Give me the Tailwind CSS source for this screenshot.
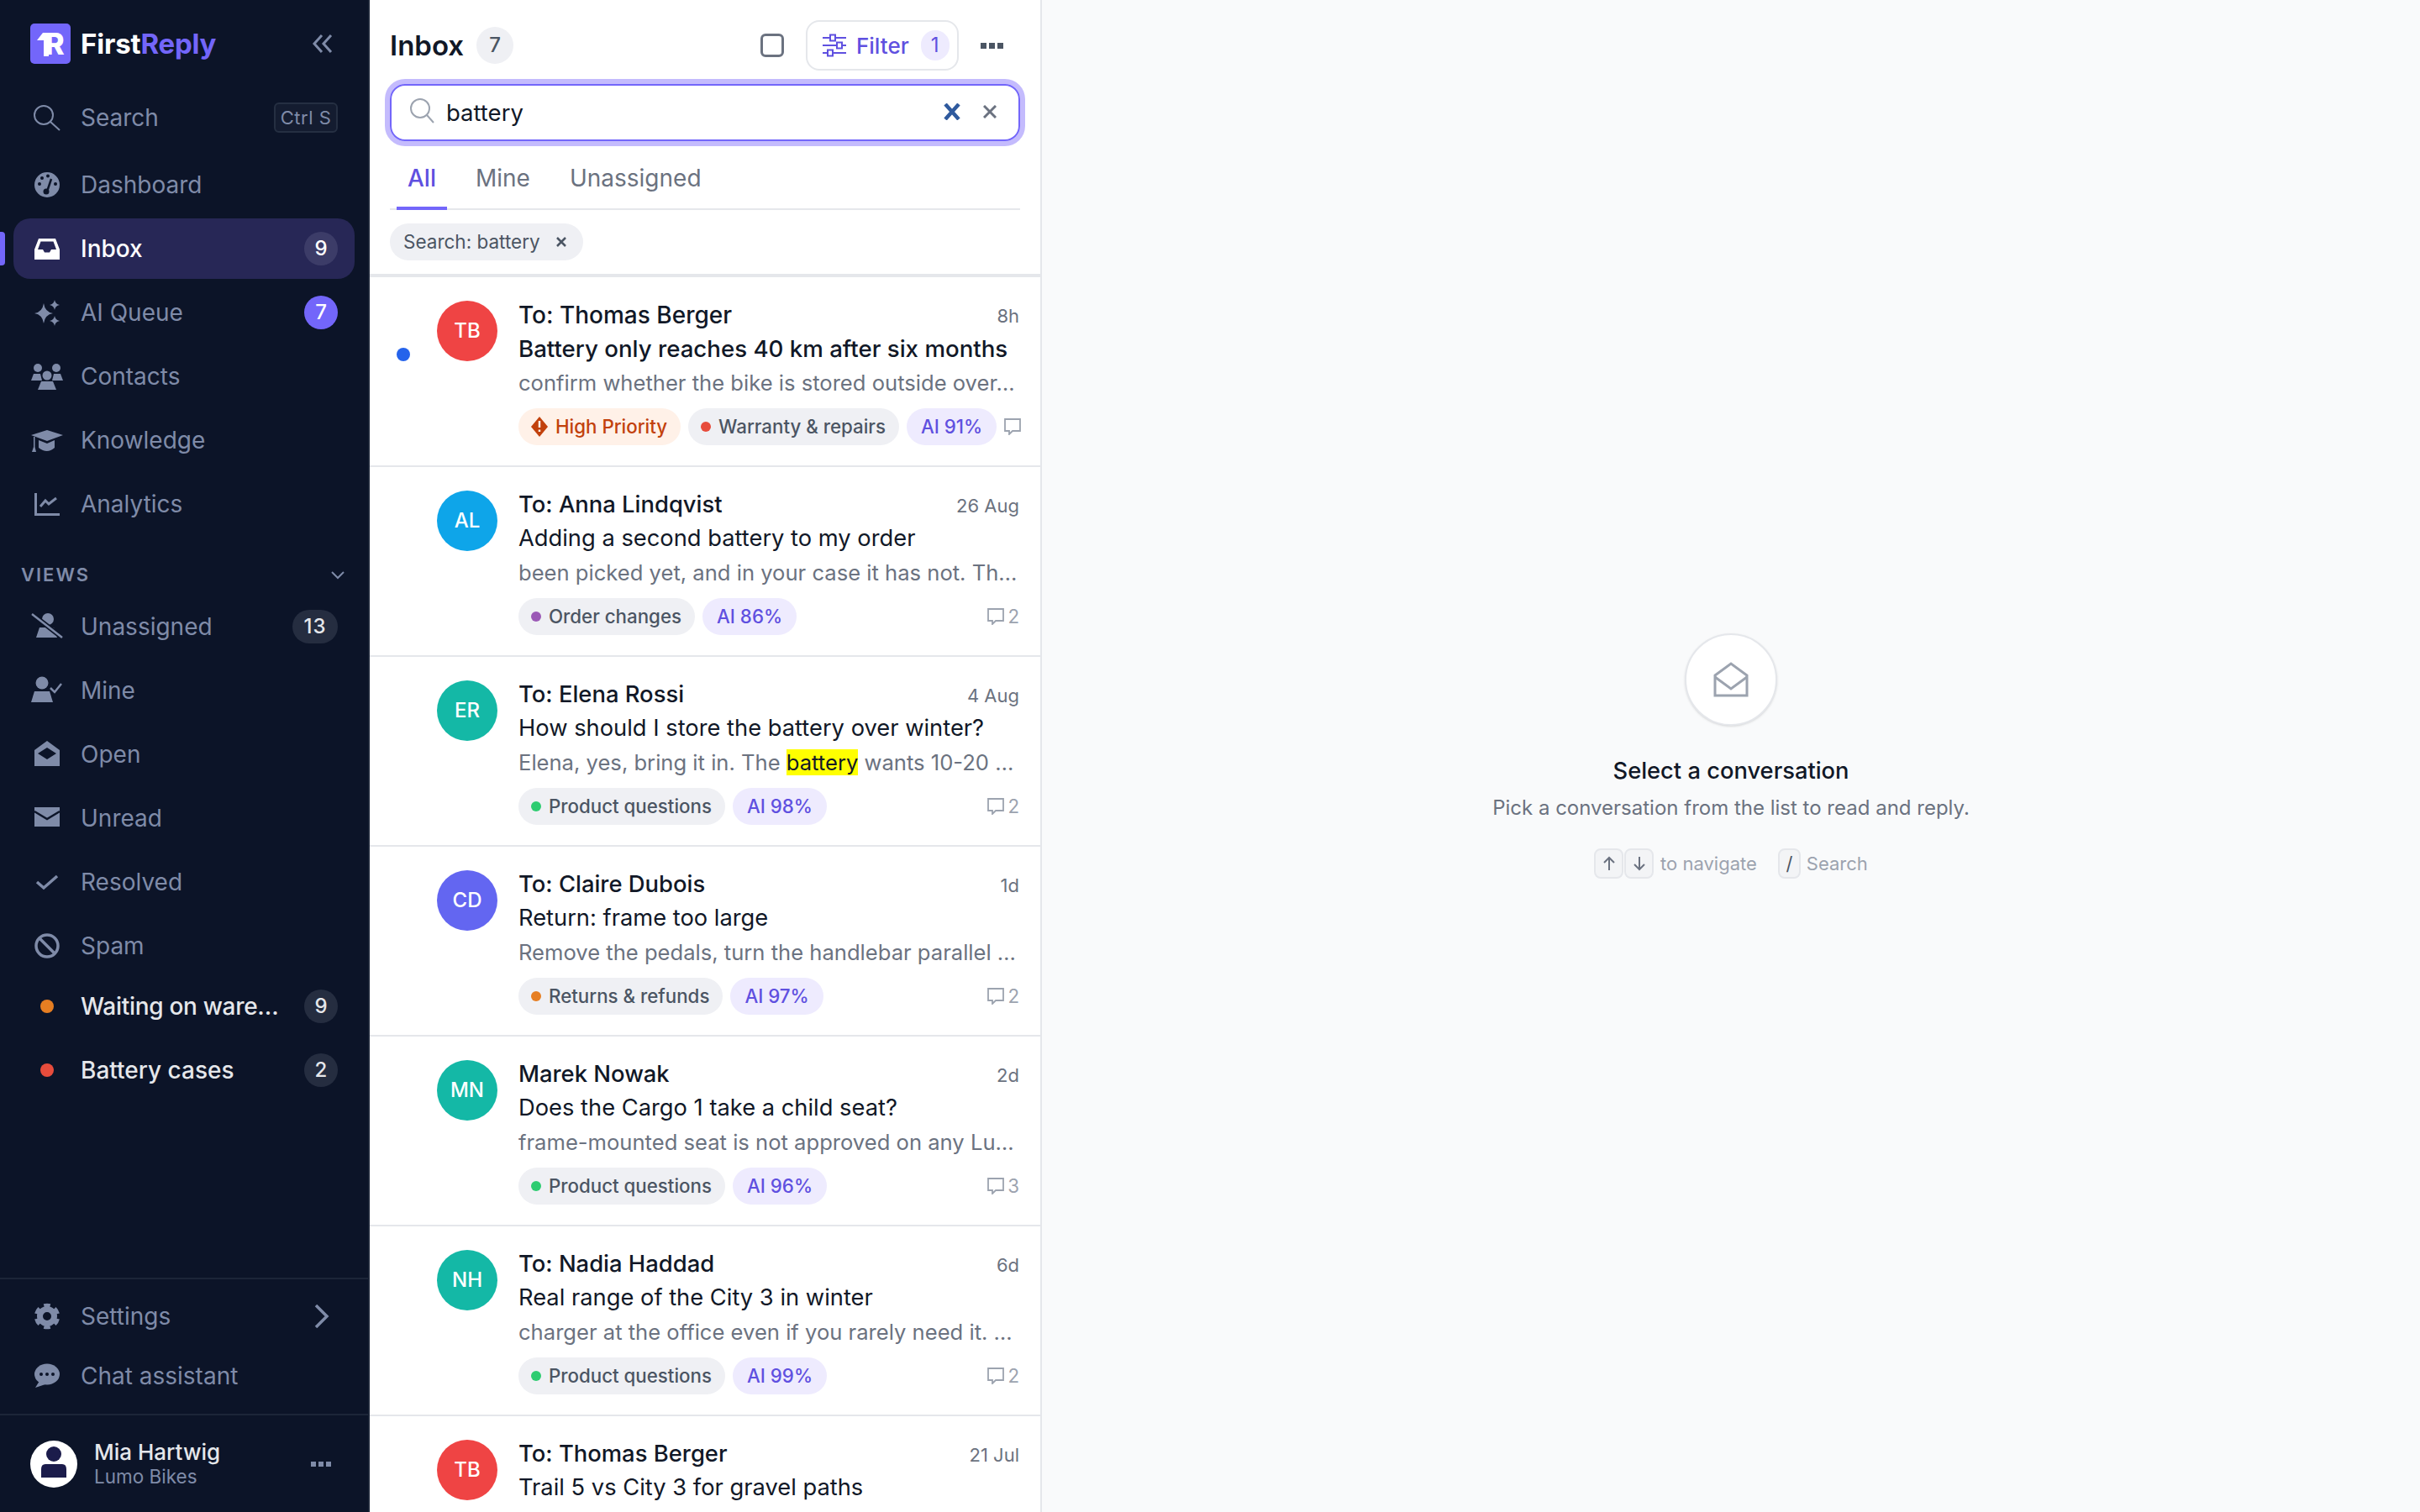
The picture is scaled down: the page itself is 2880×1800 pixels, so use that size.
<!DOCTYPE html>
<html>

<head>
    <meta charset="UTF-8">
    <meta name="viewport" content="width=device-width, initial-scale=1.0">
    <script src="https://cdn.jsdelivr.net/npm/@tailwindcss/browser@4"></script>
</head>

<body class="font-[Inter,sans-serif] antialiased">
    <div class="flex h-[1800px] w-[2880px] overflow-hidden bg-[#f9fafb]">

        <!-- Sidebar -->
        <aside class="relative flex h-full w-[440px] shrink-0 flex-col border-r-[2px] border-[#1c2538] bg-[#0c1428] text-[28px] text-[#7f8ba8]">
            <div class="absolute top-[276px] left-0 h-[40px] w-[6px] rounded-r-[4px] bg-[#7366fa]"></div>

            <div class="flex h-[104px] items-center pl-[36px] pr-[42px]">
                <div class="relative flex h-[48px] w-[48px] items-center justify-center rounded-[5px] bg-[#7366fa] text-[35px] leading-none font-extrabold text-white">
                    <span class="pl-[10px]">R</span>
                    <svg class="absolute top-0 left-0" width="48" height="48" viewBox="0 0 48 48"><path d="M8 20 L15 11 H22 V39 H16 V20 Z" fill="#fff" /></svg>
                </div>
                <div class="ml-[12px] text-[33px] leading-none font-bold tracking-[-0.2px] text-white">First<span class="text-[#7366fa]">Reply</span></div>
                <svg class="ml-auto" width="24" height="22" viewBox="0 0 24 22" fill="none" stroke="#7f8ba8" stroke-width="3"><path d="M11 1 L2 11 L11 21 M22 1 L13 11 L22 21" /></svg>
            </div>

            <nav class="flex flex-col">
                <div class="ml-[16px] flex h-[72px] w-[406px] items-center rounded-[20px] pr-[20px] pl-[21px]">
                    <svg class="mr-[21px] shrink-0" width="38" height="38" viewBox="0 0 38 38" fill="none" stroke="#7f8ba8" stroke-width="2"><circle cx="15" cy="16" r="11" /><path d="M23 24 L34 34" /></svg>
                    Search
                    <span class="ml-auto flex h-[36px] w-[76px] items-center justify-center rounded-[6px] border-[2px] border-[#252f42] bg-[#141c30] text-[22px] tracking-[0.5px]">Ctrl S</span>
                </div>
                <div class="mt-[8px] flex flex-col gap-[4px]">
                    <div class="ml-[16px] flex h-[72px] w-[406px] items-center rounded-[20px] pr-[20px] pl-[21px]">
                        <svg class="mr-[21px] shrink-0" width="38" height="38" viewBox="0 0 38 38"><circle cx="19" cy="19" r="15" fill="#7f8ba8" /><circle cx="10" cy="18" r="2" fill="#0c1428" /><circle cx="13" cy="11" r="2" fill="#0c1428" /><circle cx="20" cy="8.500" r="2" fill="#0c1428" /><circle cx="29" cy="18" r="2" fill="#0c1428" /><path d="M19 27 L24 12" stroke="#0c1428" stroke-width="2.500" /><circle cx="18" cy="27" r="3.500" fill="#0c1428" /></svg>
                        Dashboard
                    </div>
                    <div class="ml-[16px] flex h-[72px] w-[406px] items-center rounded-[20px] bg-[#272756] pr-[20px] pl-[21px] font-medium text-white">
                        <svg class="mr-[21px] shrink-0" width="38" height="38" viewBox="0 0 38 38"><path fill-rule="evenodd" fill="#fff" d="M9 7 H29 L34 20 V32 H4 V20 Z M11.500 10.500 L8 20 H14 L16 23.500 H22 L24 20 H30 L26.500 10.500 Z" /></svg>
                        Inbox
                        <span class="ml-auto flex h-[40px] w-[40px] items-center justify-center rounded-full bg-[#3c3c68] text-[24px] font-medium text-white">9</span>
                    </div>
                    <div class="ml-[16px] flex h-[72px] w-[406px] items-center rounded-[20px] pr-[20px] pl-[21px]">
                        <svg class="mr-[21px] shrink-0" width="38" height="38" viewBox="0 0 38 38" fill="#7f8ba8"><path d="M15 8 Q16.500 18.500 26 20 Q16.500 21.500 15 32 Q13.500 21.500 4 20 Q13.500 18.500 15 8 Z" /><path d="M28 4 Q28.800 9 34 10 Q28.800 11 28 16 Q27.200 11 22 10 Q27.200 9 28 4 Z" /><path d="M28 23 Q28.800 28 34 29 Q28.800 30 28 35 Q27.200 30 22 29 Q27.200 28 28 23 Z" /></svg>
                        AI Queue
                        <span class="ml-auto flex h-[40px] w-[40px] items-center justify-center rounded-full bg-[#7366fa] text-[24px] font-medium text-white">7</span>
                    </div>
                    <div class="ml-[16px] flex h-[72px] w-[406px] items-center rounded-[20px] pr-[20px] pl-[21px]">
                        <svg class="mr-[21px] shrink-0" width="38" height="38" viewBox="0 0 38 38" fill="#7f8ba8"><circle cx="8" cy="9" r="5" /><circle cx="30" cy="9" r="5" /><circle cx="19" cy="18" r="5.500" /><path d="M3 16 H11 L13 24 H0 Z M27 16 H35 L38 24 H25 Z M12 25 H26 L30 35 H8 Z" /></svg>
                        Contacts
                    </div>
                    <div class="ml-[16px] flex h-[72px] w-[406px] items-center rounded-[20px] pr-[20px] pl-[21px]">
                        <svg class="mr-[21px] shrink-0" width="38" height="38" viewBox="0 0 38 38" fill="#7f8ba8"><path d="M19 7 L38 13 L19 20 L0 13 Z" /><path d="M9 19 L19 23 L28 19 V28 Q19 36 9 28 Z" /><path d="M3 15 H4.500 V27 L6 33 H1 L3 27 Z" /></svg>
                        Knowledge
                    </div>
                    <div class="ml-[16px] flex h-[72px] w-[406px] items-center rounded-[20px] pr-[20px] pl-[21px]">
                        <svg class="mr-[21px] shrink-0" width="38" height="38" viewBox="0 0 38 38" fill="none" stroke="#7f8ba8"><path d="M5.500 6 V31.500 H34" stroke-width="3" /><path d="M11 22 L17 15 L21 19 L30 12" stroke-width="3" /></svg>
                        Analytics
                    </div>
                </div>

                <div class="mt-[28px] mb-[6px] flex h-[40px] items-center pr-[28px] pl-[25px] text-[22px] font-semibold tracking-[2px]">
                    VIEWS
                    <svg class="ml-auto" width="16" height="11" viewBox="0 0 16 11" fill="none" stroke="#7f8ba8" stroke-width="2"><path d="M1 2 L8 9 L15 2" /></svg>
                </div>

                <div class="flex flex-col gap-[4px]">
                    <div class="ml-[16px] flex h-[72px] w-[406px] items-center rounded-[20px] pr-[20px] pl-[21px]">
                        <svg class="mr-[21px] shrink-0" width="38" height="38" viewBox="0 0 38 38"><circle cx="20" cy="10" r="7" fill="#7f8ba8" /><path d="M10 20 H27 L31 32 H6 Z" fill="#7f8ba8" /><path d="M1 4 L37 32" stroke="#0c1428" stroke-width="6" /><path d="M1 4 L37 32" stroke="#7f8ba8" stroke-width="2.500" /></svg>
                        Unassigned
                        <span class="ml-auto flex h-[40px] w-[54px] items-center justify-center rounded-full bg-[#252d40] text-[24px] font-medium tracking-[1px] text-[#e5e7eb]">13</span>
                    </div>
                    <div class="ml-[16px] flex h-[72px] w-[406px] items-center rounded-[20px] pr-[20px] pl-[21px]">
                        <svg class="mr-[21px] shrink-0" width="38" height="38" viewBox="0 0 38 38"><circle cx="13" cy="10" r="7.500" fill="#7f8ba8" /><path d="M4 20 H22 L26 33 H0 Z" fill="#7f8ba8" /><path d="M23 16 L28 21 L36 11" fill="none" stroke="#7f8ba8" stroke-width="2.500" /></svg>
                        Mine
                    </div>
                    <div class="ml-[16px] flex h-[72px] w-[406px] items-center rounded-[20px] pr-[20px] pl-[21px]">
                        <svg class="mr-[21px] shrink-0" width="38" height="38" viewBox="0 0 38 38"><path fill-rule="evenodd" fill="#7f8ba8" d="M19 3 L34 14 V33 H4 V14 Z M19 11 L8 18 L19 25 L30 18 Z" /></svg>
                        Open
                    </div>
                    <div class="ml-[16px] flex h-[72px] w-[406px] items-center rounded-[20px] pr-[20px] pl-[21px]">
                        <svg class="mr-[21px] shrink-0" width="38" height="38" viewBox="0 0 38 38"><rect x="4" y="6" width="30" height="23" fill="#7f8ba8" /><path d="M4 11 L19 20 L34 11" fill="none" stroke="#0c1428" stroke-width="2.500" /></svg>
                        Unread
                    </div>
                    <div class="ml-[16px] flex h-[72px] w-[406px] items-center rounded-[20px] pr-[20px] pl-[21px]">
                        <svg class="mr-[21px] shrink-0" width="38" height="38" viewBox="0 0 38 38" fill="none" stroke="#7f8ba8" stroke-width="3.500"><path d="M7 19 L15 26 L31 12" /></svg>
                        Resolved
                    </div>
                    <div class="ml-[16px] flex h-[72px] w-[406px] items-center rounded-[20px] pr-[20px] pl-[21px]">
                        <svg class="mr-[21px] shrink-0" width="38" height="38" viewBox="0 0 38 38" fill="none" stroke="#7f8ba8" stroke-width="3.500"><circle cx="19" cy="19" r="13" /><path d="M10 10 L28 28" /></svg>
                        Spam
                    </div>
                </div>
                <div class="flex flex-col gap-[4px]">
                    <div class="ml-[16px] flex h-[72px] w-[406px] items-center rounded-[20px] pr-[20px] pl-[32px] font-medium text-[#e5e7eb]">
                        <span class="mr-[32px] h-[16px] w-[16px] shrink-0 rounded-full bg-[#e67e22]"></span>
                        <span class="tracking-[-0.3px]">Waiting on ware…</span>
                        <span class="ml-auto flex h-[40px] w-[40px] items-center justify-center rounded-full bg-[#252d40] text-[24px] font-medium">9</span>
                    </div>
                    <div class="ml-[16px] flex h-[72px] w-[406px] items-center rounded-[20px] pr-[20px] pl-[32px] font-medium text-[#e5e7eb]">
                        <span class="mr-[32px] h-[16px] w-[16px] shrink-0 rounded-full bg-[#e74c3c]"></span>
                        Battery cases
                        <span class="ml-auto flex h-[40px] w-[40px] items-center justify-center rounded-full bg-[#252d40] text-[24px] font-medium">2</span>
                    </div>
                </div>
            </nav>

            <div class="mt-auto border-t-[2px] border-[#1c2538] pt-[8px] pb-[9px]">
                <div class="ml-[16px] flex h-[71px] w-[406px] items-center pr-[30px] pl-[21px]">
                    <svg class="mr-[21px] shrink-0" width="38" height="38" viewBox="0 0 38 38" fill="none" stroke="#7f8ba8"><circle cx="19" cy="19" r="8.500" stroke-width="7" /><circle cx="19" cy="19" r="13" stroke-width="4.500" pathLength="60" stroke-dasharray="5.500 4.500" stroke-dashoffset="2.750" transform="rotate(90 19 19)" /></svg>
                    Settings
                    <svg class="ml-auto" width="18" height="28" viewBox="0 0 18 28" fill="none" stroke="#7f8ba8" stroke-width="3.500"><path d="M2 1 L15 14 L2 27" /></svg>
                </div>
                <div class="ml-[16px] flex h-[72px] w-[406px] items-center pr-[20px] pl-[21px]">
                    <svg class="mr-[21px] shrink-0" width="38" height="38" viewBox="0 0 38 38"><ellipse cx="19" cy="17" rx="15" ry="12.500" fill="#7f8ba8" /><path d="M10 25 L5 33 L17 29 Z" fill="#7f8ba8" /><circle cx="12" cy="17" r="2" fill="#0c1428" /><circle cx="19" cy="17" r="2" fill="#0c1428" /><circle cx="26" cy="17" r="2" fill="#0c1428" /></svg>
                    Chat assistant
                </div>
            </div>

            <div class="flex h-[117px] items-center border-t-[2px] border-[#1c2538] pr-[44px] pl-[36px]">
                <div class="flex h-[56px] w-[56px] shrink-0 items-center justify-center rounded-full bg-white">
                    <svg width="34" height="44" viewBox="0 0 34 44" fill="#1b1c4b"><circle cx="17" cy="10" r="9" /><path d="M7 22 H27 Q32 22 32 28 V38 H2 V28 Q2 22 7 22 Z" /></svg>
                </div>
                <div class="ml-[20px] flex flex-col">
                    <span class="text-[26px] leading-[30px] font-medium text-[#e5e7eb]">Mia Hartwig</span>
                    <span class="text-[22.500px] leading-[27px] text-[#7f8ba8]">Lumo Bikes</span>
                </div>
                <div class="ml-auto flex gap-[3px]"><i class="h-[6px] w-[6px] bg-[#7f8ba8]"></i><i class="h-[6px] w-[6px] bg-[#7f8ba8]"></i><i class="h-[6px] w-[6px] bg-[#7f8ba8]"></i></div>
            </div>
        </aside>

        <!-- Conversation list -->
        <section class="flex h-full w-[800px] shrink-0 flex-col border-r-[2px] border-[#e5e7eb] bg-white">
            <div class="border-b-[4px] border-[#e5e7eb] px-[24px] pt-[24px] pb-[16px]">
                <div class="flex h-[60px] items-center">
                    <h1 class="text-[33px] leading-none font-semibold text-[#111827]">Inbox</h1>
                    <span class="ml-[15px] flex h-[44px] w-[44px] items-center justify-center rounded-full bg-[#eff0f4] text-[24px] font-medium text-[#4b5563]">7</span>
                    <span class="ml-auto h-[28px] w-[28px] rounded-[6px] border-[3px] border-[#6b7280]"></span>
                    <div class="ml-[26px] flex h-[60px] w-[182px] items-center rounded-[16px] border-[2px] border-[#e5e7eb] pl-[18px] text-[26px] font-medium text-[#5f50e0]">
                        <svg class="mr-[12px] shrink-0" width="28" height="28" viewBox="0 0 28 28" fill="none" stroke="#5f50e0" stroke-width="2"><path d="M0 5 H9 M15 5 H28 M0 14 H17 M23 14 H28 M0 23 H6 M12 23 H28" /><rect x="9" y="1.500" width="6" height="7" /><rect x="17" y="10.500" width="6" height="7" /><rect x="6" y="19.500" width="6" height="7" /></svg>
                        Filter
                        <span class="ml-[14px] flex h-[36px] w-[34px] items-center justify-center rounded-full bg-[#eeebfe] text-[24px] font-normal">1</span>
                    </div>
                    <div class="mr-[20px] ml-[26px] flex gap-[3px]"><i class="h-[7px] w-[7px] bg-[#4b5563]"></i><i class="h-[7px] w-[7px] bg-[#4b5563]"></i><i class="h-[7px] w-[7px] bg-[#4b5563]"></i></div>
                </div>
                <div class="mt-[16px] flex h-[68px] items-center rounded-[18px] border-[2px] border-[#7366fa] pr-[26px] pl-[21px] ring-[6px] ring-[#c4bbfd]">
                    <svg class="mr-[14px] mb-[4px] shrink-0" width="30" height="30" viewBox="0 0 30 30" fill="none" stroke="#9ca3af" stroke-width="2"><circle cx="13" cy="12" r="11" /><path d="M21 20 L29 29" /></svg>
                    <span class="pt-[2px] text-[27.500px] text-[#111827]">battery</span>
                    <svg class="mb-[2px] ml-auto" width="20" height="20" viewBox="0 0 20 20" fill="none" stroke="#2f5a9e" stroke-width="4.500"><path d="M2 1 L18 19 M18 1 L2 19" /></svg>
                    <svg class="mb-[2px] ml-[27px]" width="16" height="16" viewBox="0 0 16 16" fill="none" stroke="#6b7280" stroke-width="3"><path d="M1 1 L15 15 M15 1 L1 15" /></svg>
                </div>
                <div class="flex h-[82px] gap-[21px] border-b-[2px] border-[#e5e7eb] pl-[8px] text-[28px] font-normal text-[#6b7280]">
                    <span class="flex h-[82px] items-center border-b-[4px] border-[#7366fa] px-[13px] pt-[10px] font-medium text-[#5f50e0]">All</span>
                    <span class="flex h-[82px] items-center border-b-[4px] border-transparent px-[13px] pt-[10px]">Mine</span>
                    <span class="flex h-[82px] items-center border-b-[4px] border-transparent px-[13px] pt-[10px]">Unassigned</span>
                </div>
                <div class="mt-[16px] flex h-[44px] w-[230px] items-center rounded-full bg-[#eff0f4] pl-[16px] text-[22.500px] text-[#4b5563]">
                    Search: battery
                    <svg class="ml-[19px]" width="12" height="12" viewBox="0 0 12 12" fill="none" stroke="#4b5563" stroke-width="2.500"><path d="M1 1 L11 11 M11 1 L1 11" /></svg>
                </div>
            </div>

            <div class="flex-1 overflow-hidden">
                <!-- row -->
                <div class="relative flex h-[226px] border-b-[2px] border-[#e5e7eb] pt-[28px] pr-[25px] pl-[80px]">
                    <span class="absolute top-[84px] left-[32px] h-[16px] w-[16px] rounded-full bg-[#2563eb]"></span>
                    <div class="flex h-[72px] w-[72px] shrink-0 items-center justify-center rounded-full bg-[#ef4444] text-[24px] font-medium text-white">TB</div>
                    <div class="-mt-[3px] ml-[25px] min-w-0 flex-1">
                        <div class="flex h-[40px] items-center justify-between"><span class="text-[28px] font-medium text-[#111827]">To: Thomas Berger</span><span class="pt-[3px] text-[22px] text-[#6b7280]">8h</span></div>
                        <div class="h-[41px] text-[27.650px] leading-[40px] font-medium whitespace-nowrap text-[#111827]">Battery only reaches 40 km after six months</div>
                        <div class="h-[40px] text-[25.600px] leading-[40px] whitespace-nowrap text-[#6b7280]">confirm whether the bike is stored outside over…</div>
                        <div class="mt-[10px] flex h-[44px] items-center gap-[9px] text-[22.300px] whitespace-nowrap">
                            <span class="flex h-[44px] items-center rounded-full bg-[#fff1e8] pr-[16px] pl-[15px] font-medium text-[#c2410c]"><svg class="mr-[9px]" width="20" height="24" viewBox="0 0 20 24"><path d="M10 0 L20 12 L10 24 L0 12 Z" fill="#c2410c" /><path d="M10 5 V13 M10 15.500 V18" stroke="#fff1e8" stroke-width="2.500" /></svg>High Priority</span>
                            <span class="flex h-[44px] items-center rounded-full bg-[#eff0f4] pr-[16px] pl-[15px] font-medium text-[#4b5563]"><i class="mr-[9px] h-[12px] w-[12px] rounded-full bg-[#e74c3c]"></i>Warranty &amp; repairs</span>
                            <span class="flex h-[44px] items-center rounded-full bg-[#eeebfe] px-[17px] font-medium text-[#5f50e0]">AI 91%</span>
                            <span class="ml-auto flex items-center gap-[4px] text-[#9ca3af]"><svg width="20" height="20" viewBox="0 0 20 20" fill="none" stroke="#9ca3af" stroke-width="1.800"><path d="M1 1 H19 V15 H10 L6 19 V15 H1 Z" /></svg></span>
                        </div>
                    </div>
                </div>
                <!-- row -->
                <div class="relative flex h-[226px] border-b-[2px] border-[#e5e7eb] pt-[28px] pr-[25px] pl-[80px]">
                    <div class="flex h-[72px] w-[72px] shrink-0 items-center justify-center rounded-full bg-[#0ea5e9] text-[24px] font-medium text-white">AL</div>
                    <div class="-mt-[3px] ml-[25px] min-w-0 flex-1">
                        <div class="flex h-[40px] items-center justify-between"><span class="text-[27.400px] font-medium text-[#111827]">To: Anna Lindqvist</span><span class="pt-[3px] text-[22px] text-[#6b7280]">26 Aug</span></div>
                        <div class="h-[41px] text-[27.300px] leading-[40px] font-normal whitespace-nowrap text-[#111827]">Adding a second battery to my order</div>
                        <div class="h-[40px] text-[25.600px] leading-[40px] whitespace-nowrap text-[#6b7280]">been picked yet, and in your case it has not. Th…</div>
                        <div class="mt-[10px] flex h-[44px] items-center gap-[9px] text-[22.300px] whitespace-nowrap">
                            <span class="flex h-[44px] items-center rounded-full bg-[#eff0f4] pr-[16px] pl-[15px] font-medium text-[#4b5563]"><i class="mr-[9px] h-[12px] w-[12px] rounded-full bg-[#9b59b6]"></i>Order changes</span>
                            <span class="flex h-[44px] items-center rounded-full bg-[#eeebfe] px-[17px] font-medium text-[#5f50e0]">AI 86%</span>
                            <span class="ml-auto flex items-center gap-[4px] text-[#9ca3af]"><svg width="20" height="20" viewBox="0 0 20 20" fill="none" stroke="#9ca3af" stroke-width="1.800"><path d="M1 1 H19 V15 H10 L6 19 V15 H1 Z" /></svg>2</span>
                        </div>
                    </div>
                </div>
                <!-- row -->
                <div class="relative flex h-[226px] border-b-[2px] border-[#e5e7eb] pt-[28px] pr-[25px] pl-[80px]">
                    <div class="flex h-[72px] w-[72px] shrink-0 items-center justify-center rounded-full bg-[#14b8a6] text-[24px] font-medium text-white">ER</div>
                    <div class="-mt-[3px] ml-[25px] min-w-0 flex-1">
                        <div class="flex h-[40px] items-center justify-between"><span class="text-[27.400px] font-medium text-[#111827]">To: Elena Rossi</span><span class="pt-[3px] text-[22px] text-[#6b7280]">4 Aug</span></div>
                        <div class="h-[41px] text-[27.300px] leading-[40px] font-normal whitespace-nowrap text-[#111827]">How should I store the battery over winter?</div>
                        <div class="h-[40px] text-[25.600px] leading-[40px] whitespace-nowrap text-[#6b7280]">Elena, yes, bring it in. The <mark class="bg-[#ffff00] text-[#111827]">battery</mark> wants 10-20 …</div>
                        <div class="mt-[10px] flex h-[44px] items-center gap-[9px] text-[22.300px] whitespace-nowrap">
                            <span class="flex h-[44px] items-center rounded-full bg-[#eff0f4] pr-[16px] pl-[15px] font-medium text-[#4b5563]"><i class="mr-[9px] h-[12px] w-[12px] rounded-full bg-[#2ecc71]"></i>Product questions</span>
                            <span class="flex h-[44px] items-center rounded-full bg-[#eeebfe] px-[17px] font-medium text-[#5f50e0]">AI 98%</span>
                            <span class="ml-auto flex items-center gap-[4px] text-[#9ca3af]"><svg width="20" height="20" viewBox="0 0 20 20" fill="none" stroke="#9ca3af" stroke-width="1.800"><path d="M1 1 H19 V15 H10 L6 19 V15 H1 Z" /></svg>2</span>
                        </div>
                    </div>
                </div>
                <!-- row -->
                <div class="relative flex h-[226px] border-b-[2px] border-[#e5e7eb] pt-[28px] pr-[25px] pl-[80px]">
                    <div class="flex h-[72px] w-[72px] shrink-0 items-center justify-center rounded-full bg-[#6366f1] text-[24px] font-medium text-white">CD</div>
                    <div class="-mt-[3px] ml-[25px] min-w-0 flex-1">
                        <div class="flex h-[40px] items-center justify-between"><span class="text-[27.400px] font-medium text-[#111827]">To: Claire Dubois</span><span class="pt-[3px] text-[22px] text-[#6b7280]">1d</span></div>
                        <div class="h-[41px] text-[27.300px] leading-[40px] font-normal whitespace-nowrap text-[#111827]">Return: frame too large</div>
                        <div class="h-[40px] text-[25.600px] leading-[40px] whitespace-nowrap text-[#6b7280]">Remove the pedals, turn the handlebar parallel …</div>
                        <div class="mt-[10px] flex h-[44px] items-center gap-[9px] text-[22.300px] whitespace-nowrap">
                            <span class="flex h-[44px] items-center rounded-full bg-[#eff0f4] pr-[16px] pl-[15px] font-medium text-[#4b5563]"><i class="mr-[9px] h-[12px] w-[12px] rounded-full bg-[#e67e22]"></i>Returns &amp; refunds</span>
                            <span class="flex h-[44px] items-center rounded-full bg-[#eeebfe] px-[17px] font-medium text-[#5f50e0]">AI 97%</span>
                            <span class="ml-auto flex items-center gap-[4px] text-[#9ca3af]"><svg width="20" height="20" viewBox="0 0 20 20" fill="none" stroke="#9ca3af" stroke-width="1.800"><path d="M1 1 H19 V15 H10 L6 19 V15 H1 Z" /></svg>2</span>
                        </div>
                    </div>
                </div>
                <!-- row -->
                <div class="relative flex h-[226px] border-b-[2px] border-[#e5e7eb] pt-[28px] pr-[25px] pl-[80px]">
                    <div class="flex h-[72px] w-[72px] shrink-0 items-center justify-center rounded-full bg-[#14b8a6] text-[24px] font-medium text-white">MN</div>
                    <div class="-mt-[3px] ml-[25px] min-w-0 flex-1">
                        <div class="flex h-[40px] items-center justify-between"><span class="text-[27.400px] font-medium text-[#111827]">Marek Nowak</span><span class="pt-[3px] text-[22px] text-[#6b7280]">2d</span></div>
                        <div class="h-[41px] text-[27.300px] leading-[40px] font-normal whitespace-nowrap text-[#111827]">Does the Cargo 1 take a child seat?</div>
                        <div class="h-[40px] text-[25.600px] leading-[40px] whitespace-nowrap text-[#6b7280]">frame-mounted seat is not approved on any Lu…</div>
                        <div class="mt-[10px] flex h-[44px] items-center gap-[9px] text-[22.300px] whitespace-nowrap">
                            <span class="flex h-[44px] items-center rounded-full bg-[#eff0f4] pr-[16px] pl-[15px] font-medium text-[#4b5563]"><i class="mr-[9px] h-[12px] w-[12px] rounded-full bg-[#2ecc71]"></i>Product questions</span>
                            <span class="flex h-[44px] items-center rounded-full bg-[#eeebfe] px-[17px] font-medium text-[#5f50e0]">AI 96%</span>
                            <span class="ml-auto flex items-center gap-[4px] text-[#9ca3af]"><svg width="20" height="20" viewBox="0 0 20 20" fill="none" stroke="#9ca3af" stroke-width="1.800"><path d="M1 1 H19 V15 H10 L6 19 V15 H1 Z" /></svg>3</span>
                        </div>
                    </div>
                </div>
                <!-- row -->
                <div class="relative flex h-[226px] border-b-[2px] border-[#e5e7eb] pt-[28px] pr-[25px] pl-[80px]">
                    <div class="flex h-[72px] w-[72px] shrink-0 items-center justify-center rounded-full bg-[#14b8a6] text-[24px] font-medium text-white">NH</div>
                    <div class="-mt-[3px] ml-[25px] min-w-0 flex-1">
                        <div class="flex h-[40px] items-center justify-between"><span class="text-[27.400px] font-medium text-[#111827]">To: Nadia Haddad</span><span class="pt-[3px] text-[22px] text-[#6b7280]">6d</span></div>
                        <div class="h-[41px] text-[27.300px] leading-[40px] font-normal whitespace-nowrap text-[#111827]">Real range of the City 3 in winter</div>
                        <div class="h-[40px] text-[25.600px] leading-[40px] whitespace-nowrap text-[#6b7280]">charger at the office even if you rarely need it. …</div>
                        <div class="mt-[10px] flex h-[44px] items-center gap-[9px] text-[22.300px] whitespace-nowrap">
                            <span class="flex h-[44px] items-center rounded-full bg-[#eff0f4] pr-[16px] pl-[15px] font-medium text-[#4b5563]"><i class="mr-[9px] h-[12px] w-[12px] rounded-full bg-[#2ecc71]"></i>Product questions</span>
                            <span class="flex h-[44px] items-center rounded-full bg-[#eeebfe] px-[17px] font-medium text-[#5f50e0]">AI 99%</span>
                            <span class="ml-auto flex items-center gap-[4px] text-[#9ca3af]"><svg width="20" height="20" viewBox="0 0 20 20" fill="none" stroke="#9ca3af" stroke-width="1.800"><path d="M1 1 H19 V15 H10 L6 19 V15 H1 Z" /></svg>2</span>
                        </div>
                    </div>
                </div>
                <!-- row -->
                <div class="relative flex h-[226px] border-b-[2px] border-[#e5e7eb] pt-[28px] pr-[25px] pl-[80px]">
                    <div class="flex h-[72px] w-[72px] shrink-0 items-center justify-center rounded-full bg-[#ef4444] text-[24px] font-medium text-white">TB</div>
                    <div class="-mt-[3px] ml-[25px] min-w-0 flex-1">
                        <div class="flex h-[40px] items-center justify-between"><span class="text-[27.400px] font-medium text-[#111827]">To: Thomas Berger</span><span class="pt-[3px] text-[22px] text-[#6b7280]">21 Jul</span></div>
                        <div class="h-[41px] text-[27.300px] leading-[40px] font-normal whitespace-nowrap text-[#111827]">Trail 5 vs City 3 for gravel paths</div>
                    </div>
                </div>
            </div>
        </section>

        <!-- Empty state -->
        <main class="flex flex-1 flex-col items-center justify-center">
            <div class="flex h-[110px] w-[110px] items-center justify-center rounded-full border-[2px] border-[#e5e7eb] bg-white shadow-sm">
                <svg width="42" height="42" viewBox="0 0 42 42" fill="none" stroke="#9ca3af" stroke-width="3"><path d="M2 16 L21 2 L40 16 V40 H2 Z" /><path d="M2 18 L21 32 L40 18" /></svg>
            </div>
            <h2 class="mt-[34px] text-[27.300px] leading-[40px] font-medium text-[#111827]">Select a conversation</h2>
            <p class="mt-[4px] text-[24px] leading-[40px] text-[#6b7280]">Pick a conversation from the list to read and reply.</p>
            <div class="mt-[28px] flex h-[36px] items-center text-[22px] text-[#9ca3af]">
                <span class="flex h-[36px] w-[35px] items-center justify-center rounded-[8px] border-[2px] border-[#e5e7eb] bg-[#f3f4f6] text-[#4b5563]"><svg width="14" height="18" viewBox="0 0 14 18" fill="none" stroke="#6b7280" stroke-width="2"><path d="M7 17 V2 M1 8 L7 2 L13 8" /></svg></span>
                <span class="ml-[1px] flex h-[36px] w-[35px] items-center justify-center rounded-[8px] border-[2px] border-[#e5e7eb] bg-[#f3f4f6]"><svg width="14" height="18" viewBox="0 0 14 18" fill="none" stroke="#6b7280" stroke-width="2"><path d="M7 1 V16 M1 10 L7 16 L13 10" /></svg></span>
                <span class="ml-[8px]">to navigate</span>
                <span class="ml-[25px] flex h-[36px] w-[27px] items-center justify-center rounded-[8px] border-[2px] border-[#e5e7eb] bg-[#f3f4f6] text-[#4b5563]">/</span>
                <span class="ml-[7px]">Search</span>
            </div>
        </main>
    </div>
</body>

</html>
